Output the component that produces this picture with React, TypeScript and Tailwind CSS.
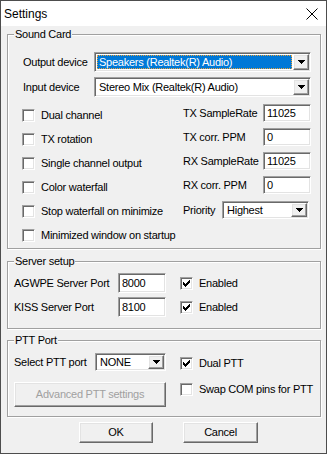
const sunken =
  "border border-t-[#a0a0a0] border-l-[#a0a0a0] border-r-white border-b-white shadow-[inset_1px_1px_0_#696969,inset_-1px_-1px_0_#e3e3e3] bg-white";
const raised =
  "border border-t-white border-l-white border-r-[#696969] border-b-[#696969] shadow-[inset_-1px_-1px_0_#a0a0a0,inset_1px_1px_0_#e3e3e3] bg-[#f0f0f0]";

function Arrow() {
  return (
    <svg width="7" height="4" viewBox="0 0 7 4" shapeRendering="crispEdges">
      <polygon points="0,0 7,0 3.5,4" fill="#000" />
    </svg>
  );
}

function Combo({ className, text, selected }: { className: string; text: string; selected?: boolean }) {
  return (
    <div className={`${sunken} ${className} flex items-stretch pl-[2px] pr-[1px] py-[1px]`}>
      {selected ? (
        <div className="flex-1 my-[1px] mr-[1px] bg-[#0078d7] text-white border border-dotted border-[#e8a33c] flex items-center pl-[1px] leading-none">
          {text}
        </div>
      ) : (
        <div className="flex-1 flex items-center pl-[2px] leading-none">{text}</div>
      )}
      <div className={`${raised} w-[16px] flex items-center justify-center`}>
        <Arrow />
      </div>
    </div>
  );
}

function TextBox({ className, value }: { className: string; value: string }) {
  return <div className={`${sunken} ${className} flex items-center pl-[3px] leading-none`}>{value}</div>;
}

function Check({ label, checked }: { label: string; checked?: boolean }) {
  return (
    <div className="flex items-center gap-[6px]">
      <div className={`${sunken} w-[13px] h-[13px] flex items-center justify-center shrink-0`}>
        {checked && (
          <svg width="7" height="7" viewBox="0 0 7 7" shapeRendering="crispEdges">
            <polygon points="0,2 2,4 6,0 7,0 7,3 2,7 0,5" fill="#000" />
          </svg>
        )}
      </div>
      <span className="leading-none whitespace-nowrap">{label}</span>
    </div>
  );
}

function Group({ title, className, children }: { title: string; className: string; children: React.ReactNode }) {
  return (
    <div
      className={`relative ml-[6px] w-[314px] border border-[#a0a0a0] shadow-[inset_1px_1px_0_#fff,1px_1px_0_#fff] ${className}`}
    >
      <span className="absolute left-[6px] top-[-7px] px-[1px] bg-[#f0f0f0] leading-[13px]">{title}</span>
      {children}
    </div>
  );
}

export default function App() {
  return (
    <div className="w-[327px] h-[454px] border border-[#4d4d4d] bg-[#f0f0f0] font-['Liberation_Sans',Arial,sans-serif] text-[11px] tracking-[-0.25px] text-black flex flex-col overflow-hidden">
      <div className="h-[25px] bg-white flex items-center justify-between pl-[3px] pr-[8px] shrink-0">
        <span className="text-[12px] tracking-normal">Settings</span>
        <svg width="12" height="12" viewBox="0 0 12 12">
          <path d="M0.5 0.5 L11.5 11.5 M11.5 0.5 L0.5 11.5" stroke="#000" strokeWidth="1" />
        </svg>
      </div>

      <Group title="Sound Card" className="mt-[8px] pt-[17px] pb-[1px]">
        <div className="flex flex-col gap-[5px] pl-[15px]">
          <div className="flex items-center h-[20px]">
            <span className="w-[71px]">Output device</span>
            <Combo className="w-[217px] h-[20px]" text="Speakers (Realtek(R) Audio)" selected />
          </div>
          <div className="flex items-center h-[20px]">
            <span className="w-[71px]">Input device</span>
            <Combo className="w-[217px] h-[20px]" text="Stereo Mix (Realtek(R) Audio)" />
          </div>
        </div>
        <div className="flex mt-[4px]">
          <div className="w-[175px] pl-[14px] pt-[2px] flex flex-col">
            <div className="h-[24px] flex items-center"><Check label="Dual channel" /></div>
            <div className="h-[24px] flex items-center"><Check label="TX rotation" /></div>
            <div className="h-[24px] flex items-center"><Check label="Single channel output" /></div>
            <div className="h-[24px] flex items-center"><Check label="Color waterfall" /></div>
            <div className="h-[24px] flex items-center"><Check label="Stop waterfall on minimize" /></div>
            <div className="h-[24px] flex items-center"><Check label="Minimized window on startup" /></div>
          </div>
          <div className="flex flex-col">
            <div className="h-[24px] flex items-center">
              <span className="w-[80px]">TX SampleRate</span>
              <TextBox className="w-[48px] h-[18px]" value="11025" />
            </div>
            <div className="h-[24px] flex items-center">
              <span className="w-[80px]">TX corr. PPM</span>
              <TextBox className="w-[48px] h-[18px]" value="0" />
            </div>
            <div className="h-[24px] flex items-center">
              <span className="w-[80px]">RX SampleRate</span>
              <TextBox className="w-[48px] h-[18px]" value="11025" />
            </div>
            <div className="h-[24px] flex items-center">
              <span className="w-[80px]">RX corr. PPM</span>
              <TextBox className="w-[48px] h-[18px]" value="0" />
            </div>
            <div className="h-[26px] flex items-center">
              <span className="w-[39px]">Priority</span>
              <Combo className="w-[87px] h-[18px]" text="Highest" />
            </div>
          </div>
        </div>
      </Group>

      <Group title="Server setup" className="mt-[12px] pt-[11px] pb-[11px]">
        <div className="flex flex-col gap-[4px] pl-[6px]">
          <div className="flex items-center h-[20px]">
            <span className="w-[104px]">AGWPE Server Port</span>
            <TextBox className="w-[48px] h-[20px]" value="8000" />
            <div className="ml-[14px]"><Check label="Enabled" checked /></div>
          </div>
          <div className="flex items-center h-[20px]">
            <span className="w-[104px]">KISS Server Port</span>
            <TextBox className="w-[48px] h-[20px]" value="8100" />
            <div className="ml-[14px]"><Check label="Enabled" checked /></div>
          </div>
        </div>
      </Group>

      <Group title="PTT Port" className="mt-[11px] pt-[12px] pb-[9px]">
        <div className="flex pl-[6px]">
          <div className="flex flex-col w-[152px]">
            <div className="flex items-center h-[18px]">
              <span className="w-[81px]">Select PTT port</span>
              <Combo className="w-[71px] h-[18px]" text="NONE" />
            </div>
            <div className={`${raised} mt-[11px] h-[25px] flex items-center justify-center text-[#a0a0a0]`}>
              Advanced PTT settings
            </div>
          </div>
          <div className="ml-[14px] flex flex-col gap-[6px]">
            <div className="h-[20px] flex items-center"><Check label="Dual PTT" checked /></div>
            <div className="h-[20px] flex items-center"><Check label="Swap COM pins for PTT" /></div>
          </div>
        </div>
      </Group>

      <div className="flex mt-[5px] pl-[78px] gap-[30px]">
        <div className={`${raised} w-[74px] h-[21px] flex items-center justify-center`}>OK</div>
        <div className={`${raised} w-[75px] h-[21px] flex items-center justify-center`}>Cancel</div>
      </div>
    </div>
  );
}
